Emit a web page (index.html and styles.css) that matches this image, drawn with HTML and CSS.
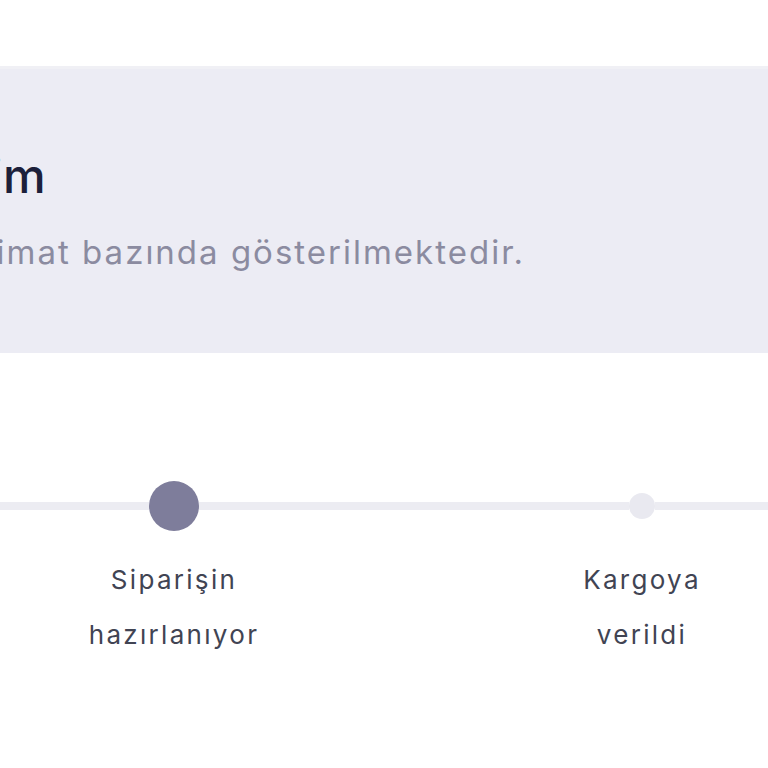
FILE: index.html
```html
<!DOCTYPE html>
<html lang="tr">
<head>
    <meta charset="UTF-8">
    <meta name="viewport" content="width=device-width, initial-scale=1.0">
    <title>Sipariş Takibi</title>
    <link rel="stylesheet" href="styles.css">
</head>
<body>
    <div class="summary">
        <div class="summary-inner">
            <h1>Aktif Siparişlerim</h1>
            <p>Tarihler tahmini teslimat bazında gösterilmektedir.</p>
        </div>
    </div>

    <div class="steps">
        <div class="step done">
            <div class="marker"><span class="seg"></span><span class="dot"></span><span class="seg"></span></div>
            <div class="label">Sipariş<br>alındı</div>
        </div>
        <div class="step active">
            <div class="marker"><span class="seg"></span><span class="dot"></span><span class="seg"></span></div>
            <div class="label">Siparişin<br>hazırlanıyor</div>
        </div>
        <div class="step">
            <div class="marker"><span class="seg"></span><span class="dot"></span><span class="seg"></span></div>
            <div class="label">Kargoya<br>verildi</div>
        </div>
        <div class="step">
            <div class="marker"><span class="seg"></span><span class="dot"></span><span class="seg"></span></div>
            <div class="label">Teslim<br>edildi</div>
        </div>
    </div>
</body>
</html>
```

FILE: styles.css
```css
body {
    font-family: Inter, "Noto Sans", sans-serif;
    margin: 0;
    background-color: #fff;
    overflow: hidden;
}
.summary {
    margin-top: 66px;
    height: 287px;
    box-sizing: border-box;
    background-color: #ececf4;
    border-top: 3px solid #f0f0f5;
    padding-top: 79px;
}
/* the block is wider than the window; only its right end shows */
.summary-inner {
    margin-left: -350px;
    white-space: nowrap;
}
h1 {
    margin: 0;
    font-size: 48px;
    line-height: 56px;
    font-weight: 500;
    letter-spacing: 0.2px;
    color: #1c1f3a;
}
.summary p {
    margin: 28px 0 0;
    font-size: 33px;
    line-height: 40px;
    letter-spacing: 2px;
    color: #8b8ba0;
}
.steps {
    display: flex;
    width: 1872px;
    margin: 128px 0 0 -528px;
}
.step {
    width: 468px;
    display: flex;
    flex-direction: column;
    align-items: center;
}
.marker {
    width: 100%;
    height: 50px;
    display: flex;
    align-items: center;
}
.seg {
    flex: 1;
    height: 8px;
    background-color: #ececf2;
}
.dot {
    width: 26px;
    height: 26px;
    border-radius: 50%;
    background-color: #e9e9f0;
}
.active .dot {
    width: 50px;
    height: 50px;
    background-color: #7e7d9b;
}
.label {
    margin-top: 21px;
    font-size: 26px;
    line-height: 55px;
    letter-spacing: 2.3px;
    color: #414453;
    text-align: center;
}
```
